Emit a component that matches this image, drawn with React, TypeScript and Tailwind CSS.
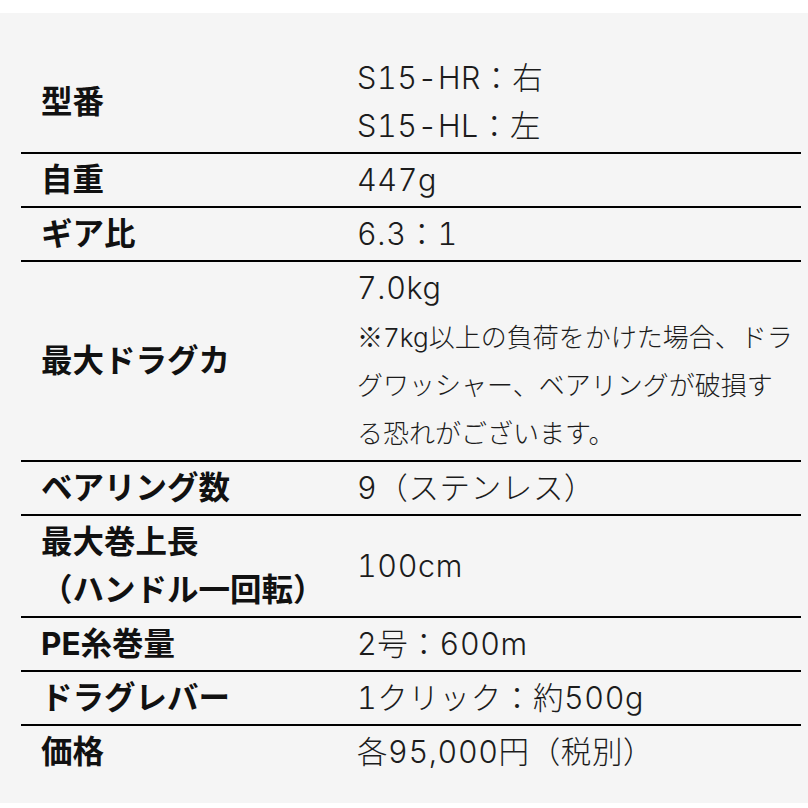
import React from "react";

type Row = { label: React.ReactNode; value: React.ReactNode; last?: boolean };

const Kome = () => (
  <span className="font-['Noto_Sans_CJK_JP',sans-serif]">※</span>
);

const rows: Row[] = [
  {
    label: "型番",
    value: (
      <>
        <div>S15-HR：右</div>
        <div>S15-HL：左</div>
      </>
    ),
  },
  { label: "自重", value: <div>447g</div> },
  { label: "ギア比", value: <div>6.3：1</div> },
  {
    label: "最大ドラグカ",
    value: (
      <>
        <div>7.0kg</div>
        <div className="text-[26px] whitespace-nowrap tracking-normal">
          <Kome />
          7kg以上の負荷をかけた場合、ドラ
          <br />
          グワッシャー、ベアリングが破損す
          <br />
          る恐れがございます。
        </div>
      </>
    ),
  },
  { label: "ベアリング数", value: <div>9（ステンレス）</div> },
  {
    label: (
      <>
        最大巻上長
        <br />
        （ハンドル一回転）
      </>
    ),
    value: <div>100cm</div>,
  },
  { label: "PE糸巻量", value: <div>2号：600m</div> },
  { label: "ドラグレバー", value: <div>1クリック：約500g</div> },
  { label: "価格", value: <div>各95,000円（税別）</div>, last: true },
];

export default function App() {
  return (
    <div className="min-h-[808px] bg-white pt-[13px] font-['Inter','Noto_Sans_CJK_JP',sans-serif] text-[#1c1c1c]">
      <div className="bg-[#f5f5f5] pl-[21px] pr-[7px] pt-[39px] pb-[25px]">
        {rows.map((r, i) => (
          <div
            key={i}
            className={`flex ${r.last ? "" : "border-b-2 border-black"}`}
          >
            <div className="w-[336px] shrink-0 flex items-center pl-[20px] py-[2px] text-[31.5px] leading-[48px] font-bold text-[#111] whitespace-nowrap">
              <div>{r.label}</div>
            </div>
            <div className="flex-1 flex flex-col justify-center py-[2px] text-[30.5px] leading-[48px] font-light tabular-nums tracking-[0.02em] whitespace-nowrap">
              {r.value}
            </div>
          </div>
        ))}
      </div>
    </div>
  );
}
